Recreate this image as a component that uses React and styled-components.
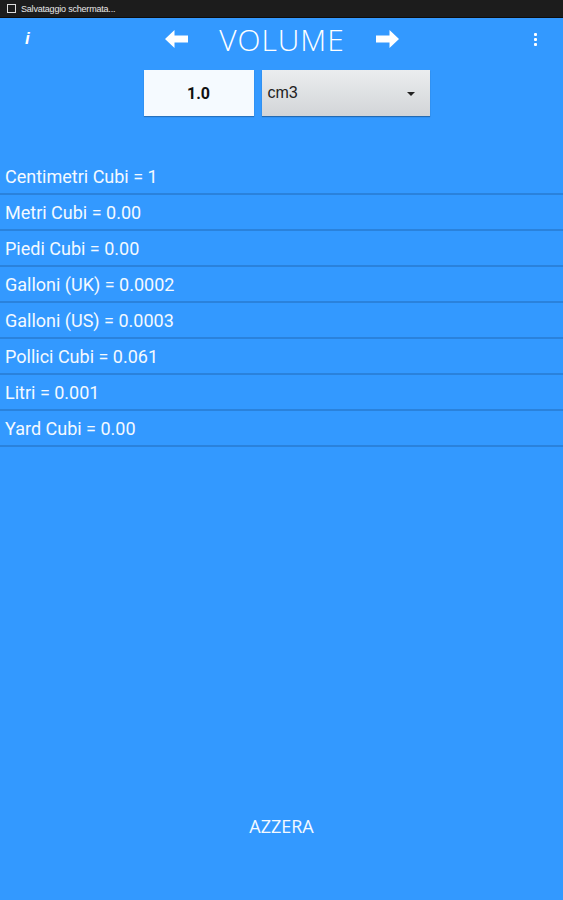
import React from 'react';
import styled, { createGlobalStyle } from 'styled-components';

const Global = createGlobalStyle`
  html, body { margin: 0; padding: 0; background: #3399ff; }
  body { font-family: Roboto, "Noto Sans", sans-serif; }
`;

const Screen = styled.div`
  width: 563px;
  height: 900px;
  display: flex;
  flex-direction: column;
  background: #3399ff;
  overflow: hidden;
`;

const StatusBar = styled.div`
  height: 17px;
  background: #1c1c1c;
  border-bottom: 1px solid #0d0d0d;
  display: flex;
  align-items: center;
  gap: 5px;
  padding-left: 7px;
  color: #e8e8e8;
  font-family: "Liberation Sans", sans-serif;
  font-size: 9px;
  letter-spacing: -0.2px;
`;

const ShotIcon = styled.span`
  width: 9px;
  height: 9px;
  border: 1px solid #ddd;
  box-sizing: border-box;
  display: inline-block;
`;

const Header = styled.div`
  height: 42px;
  display: grid;
  grid-template-columns: 1fr auto 1fr;
  align-items: center;
  padding: 0 22px 0 25px;
`;

const InfoBtn = styled.span`
  color: #fff;
  font-family: "Liberation Sans", sans-serif;
  font-style: italic;
  font-weight: bold;
  font-size: 17px;
`;

const TitleGroup = styled.div`
  display: flex;
  align-items: center;
  gap: 30px;
  margin-right: 2px;
`;

const Title = styled.h1`
  margin: 0;
  color: #fff;
  font-family: "Open Sans", sans-serif;
  font-weight: 300;
  font-size: 30px;
  letter-spacing: 1px;
`;

const Dots = styled.div`
  justify-self: end;
  display: flex;
  flex-direction: column;
  gap: 2px;
  width: 12px;
  align-items: center;
  span {
    width: 3px;
    height: 3px;
    background: #fff;
    border-radius: 1px;
  }
`;

const InputRow = styled.div`
  display: flex;
  justify-content: center;
  gap: 8px;
  margin-top: 10px;
  padding-left: 10px;
`;

const ValueBox = styled.div`
  width: 110px;
  height: 46px;
  background: #f5faff;
  box-shadow: 0 1px 1px rgba(0, 0, 0, 0.25);
  display: flex;
  align-items: center;
  justify-content: center;
  color: #111;
  font-weight: 700;
  font-size: 16px;
`;

const Select = styled.div`
  width: 168px;
  height: 46px;
  background: linear-gradient(#ebedef, #d2d5d8);
  box-shadow: 0 1px 1px rgba(0, 0, 0, 0.3);
  display: flex;
  align-items: center;
  justify-content: space-between;
  padding: 0 15px 0 6px;
  box-sizing: border-box;
  color: #222;
  font-family: "Liberation Sans", sans-serif;
  font-size: 16px;
`;

const Caret = styled.span`
  width: 0;
  height: 0;
  border-left: 4px solid transparent;
  border-right: 4px solid transparent;
  border-top: 4px solid #222;
  margin-top: 2px;
`;

const List = styled.div`
  margin-top: 43px;
`;

const Row = styled.div`
  height: 34px;
  display: flex;
  align-items: center;
  padding-left: 5px;
  color: #f4f9ff;
  font-size: 18px;
  border-bottom: 2px solid #2a82dc;
`;

const Footer = styled.div`
  margin-top: auto;
  height: 92px;
  display: flex;
  justify-content: center;
`;

const ResetBtn = styled.button`
  background: none;
  border: none;
  color: #f4f9ff;
  font-family: "Open Sans", sans-serif;
  font-size: 18px;
  height: 36px;
  padding: 0 12px;
`;

const Arrow = ({ dir }) => (
  <svg width="25" height="20" viewBox="0 0 25 20">
    <path
      d="M1 10 L10.5 1 L10.5 6.5 L24 6.5 L24 13.5 L10.5 13.5 L10.5 19 Z"
      fill="#fff"
      transform={dir === 'right' ? 'translate(25 0) scale(-1 1)' : undefined}
    />
  </svg>
);

const results = [
  'Centimetri Cubi = 1',
  'Metri Cubi = 0.00',
  'Piedi Cubi = 0.00',
  'Galloni (UK) = 0.0002',
  'Galloni (US) = 0.0003',
  'Pollici Cubi = 0.061',
  'Litri = 0.001',
  'Yard Cubi = 0.00',
];

export default function App() {
  return (
    <Screen>
      <Global />
      <StatusBar>
        <ShotIcon />
        Salvataggio schermata...
      </StatusBar>
      <Header>
        <InfoBtn>i</InfoBtn>
        <TitleGroup>
          <Arrow dir="left" />
          <Title>VOLUME</Title>
          <Arrow dir="right" />
        </TitleGroup>
        <Dots>
          <span />
          <span />
          <span />
        </Dots>
      </Header>
      <InputRow>
        <ValueBox>1.0</ValueBox>
        <Select>
          cm3
          <Caret />
        </Select>
      </InputRow>
      <List>
        {results.map(r => (
          <Row key={r}>{r}</Row>
        ))}
      </List>
      <Footer>
        <ResetBtn>AZZERA</ResetBtn>
      </Footer>
    </Screen>
  );
}
